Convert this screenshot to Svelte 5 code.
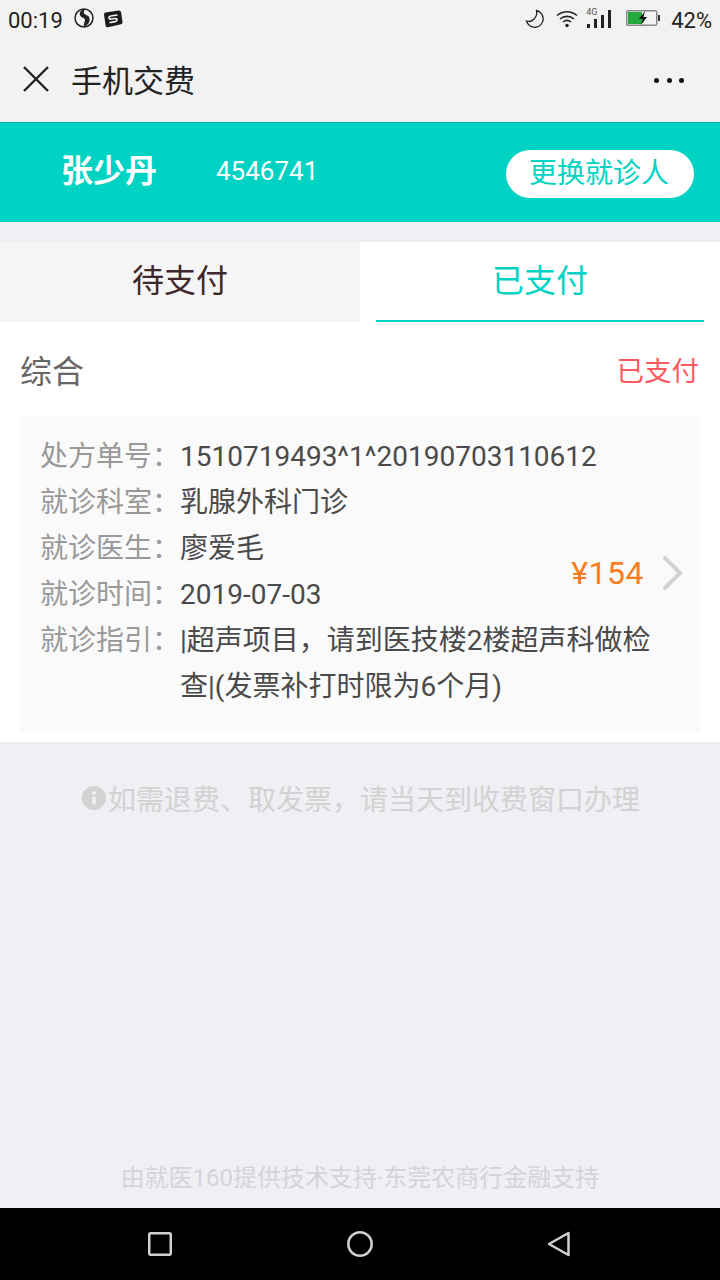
<script>
  const rows = [
    { label: '处方单号', value: '1510719493^1^20190703110612' },
    { label: '就诊科室', value: '乳腺外科门诊' },
    { label: '就诊医生', value: '廖爱毛' },
    { label: '就诊时间', value: '2019-07-03' },
    { label: '就诊指引', value: '|超声项目，请到医技楼2楼超声科做检查|(发票补打时限为6个月)' }
  ];
</script>

<div class="page">
  <header class="status">
    <div class="status-left">
      <span class="clock">00:19</span>
      <svg class="swirl" width="20" height="20" viewBox="0 0 20 20">
        <circle cx="10" cy="10" r="9" fill="none" stroke="#222" stroke-width="1.500" />
        <path d="M9 1.500C5 3 4.500 8 8.500 9.500c2.500 1 3 2.500 2 4.500l-1 4.500c5-1 6.500-5 6-8-.5-3.500-3.500-3-5-4.500C9.500 5 9.500 3 11 1.500z" fill="#222" />
      </svg>
      <svg class="sogou" width="20" height="18" viewBox="0 0 20 18">
        <path d="M1 4.500Q.8 3 2.500 2.600L15.500.4Q17.500.2 18 2l1.500 10q.3 1.800-1.500 2.300L5 17.300Q3 17.600 2.700 16z" fill="#1a1a1a" />
        <path d="M14.500 5L8 6Q5.500 6.500 6 8q.3 1.300 2.500 1l3.500-.5q2-.2 2 1.300t-2 1.800l-5.500 1" fill="none" stroke="#f2f2f2" stroke-width="1.700" />
      </svg>
    </div>
    <div class="status-right">
      <svg class="moon" width="20" height="20" viewBox="0 0 20 20">
        <path d="M11.500 1.500a8.500 8.500 0 1 1-10 10.500c5.500 2 11.500-4 10-10.500z" fill="none" stroke="#222" stroke-width="1.300" />
      </svg>
      <svg class="wifi" width="22" height="18" viewBox="0 0 22 18">
        <path d="M1 5.500c6-5 14-5 20 0M4 9c4-3.500 10-3.500 14 0M7 12c2.500-2 5.500-2 8 0" fill="none" stroke="#222" stroke-width="1.600" />
        <circle cx="11" cy="15.500" r="1.800" fill="#222" />
      </svg>
      <div class="signal">
        <span class="net">4G</span>
        <svg width="24" height="18" viewBox="0 0 24 18">
          <path d="M0 14h3v4H0zM7 9h3v9H7zM14 5h3v13h-3zM21 0h3v18h-3z" fill="#222" />
        </svg>
      </div>
      <svg class="battery" width="34" height="16" viewBox="0 0 34 16">
        <rect x=".75" y=".75" width="30" height="14.500" rx="1.500" fill="none" stroke="#888" stroke-width="1.500" />
        <rect x="2" y="2" width="14" height="12" fill="#22ab3c" />
        <rect x="32" y="5" width="2" height="6" fill="#333" />
        <path d="M19 1l-6 8h3.500l-1.500 6 6-8h-3.500z" fill="#111" />
      </svg>
      <span class="percent">42%</span>
    </div>
  </header>

  <nav class="titlebar">
    <svg class="close" width="26" height="26" viewBox="0 0 26 26">
      <path d="M1 1l24 24M25 1L1 25" fill="none" stroke="#222" stroke-width="2.400" />
    </svg>
    <h1>手机交费</h1>
    <div class="more"><i></i><i></i><i></i></div>
  </nav>

  <section class="patient">
    <span class="name">张少丹</span>
    <span class="card-no">4546741</span>
    <button>更换就诊人</button>
  </section>

  <div class="tabs">
    <div class="tab">待支付</div>
    <div class="tab active"><span>已支付</span></div>
  </div>

  <main class="order">
    <div class="order-head">
      <span class="kind">综合</span>
      <span class="state">已支付</span>
    </div>
    <div class="detail">
      <div class="rows">
        {#each rows as row}
          <div class="row">
            <span class="label">{row.label}：</span>
            <span class="value">{row.value}</span>
          </div>
        {/each}
      </div>
      <div class="price">
        <span>¥154</span>
        <svg width="22" height="34" viewBox="0 0 22 34">
          <path d="M3 2l15 15L3 32" fill="none" stroke="#d2d2d2" stroke-width="4" stroke-linecap="round" stroke-linejoin="round" />
        </svg>
      </div>
    </div>
  </main>

  <p class="notice">
    <svg width="24" height="24" viewBox="0 0 24 24">
      <circle cx="12" cy="12" r="12" fill="#d2d2d2" />
      <path d="M10.300 5.500h3.400v3h-3.400zM10.300 10.500h3.400v8h-3.400z" fill="#efeff4" />
    </svg>
    如需退费、取发票，请当天到收费窗口办理
  </p>

  <p class="support">由就医160提供技术支持·东莞农商行金融支持</p>

  <footer class="softkeys">
    <svg width="24" height="24" viewBox="0 0 24 24">
      <rect x="1.250" y="1.250" width="21.500" height="21.500" rx="1.500" fill="none" stroke="#d0d0d0" stroke-width="2.500" />
    </svg>
    <svg width="26" height="26" viewBox="0 0 26 26">
      <circle cx="13" cy="13" r="11.700" fill="none" stroke="#d0d0d0" stroke-width="2.500" />
    </svg>
    <svg width="24" height="26" viewBox="0 0 24 26">
      <path d="M21.500 2v22L2 13z" fill="none" stroke="#d0d0d0" stroke-width="2.500" stroke-linejoin="round" />
    </svg>
  </footer>
</div>

<style>
  :global(body) {
    background: #efeff4;
  }

  .page {
    display: flex;
    flex-direction: column;
    height: 1280px;
    background: #efeff4;
    font-family: Roboto, "Noto Sans CJK SC", sans-serif;
    color: #444;
  }

  .status {
    display: flex;
    justify-content: space-between;
    align-items: center;
    height: 40px;
    padding: 0 8px;
    box-sizing: border-box;
    background: #f2f2f2;
    color: #222;
  }

  .status-left,
  .status-right {
    display: flex;
    align-items: center;
  }

  .clock { font-size: 22px; margin-right: 11px; }
  .swirl { margin: -4px 9px 0 0; }
  .sogou { margin-top: -3px; }

  .moon { margin-right: 11px; margin-top: -3px; }
  .wifi { margin-right: 9px; margin-top: -3px; }
  .battery { margin-right: 11px; margin-top: -4px; }
  .percent { font-size: 22px; }

  .signal {
    position: relative;
    display: flex;
    width: 24px;
    margin-top: -3px;
    margin-right: 15px;
  }

  .net {
    position: absolute;
    left: -1px;
    top: -3px;
    font-size: 9px;
    color: #555;
  }

  .titlebar {
    display: flex;
    align-items: center;
    height: 82px;
    padding: 0 36px 4px 23px;
    box-sizing: border-box;
    background: #f2f2f2;
  }

  .close { margin-right: 22px; }

  h1 {
    flex: 1;
    margin: 0 0 2px;
    font-size: 31px;
    font-weight: 400;
    color: #222;
  }

  .more {
    display: flex;
    gap: 7.500px;
    margin-top: 2px;
  }

  .more i {
    width: 5px;
    height: 5px;
    border-radius: 50%;
    background: #111;
  }

  .patient {
    display: flex;
    align-items: center;
    height: 100px;
    padding: 0 26px 4px 61px;
    box-sizing: border-box;
    background: #00d3c4;
    border-top: 1px solid #00b5a8;
    color: #fff;
  }

  .name {
    width: 155px;
    margin-bottom: 5px;
    font-size: 32px;
    font-weight: 700;
  }

  .card-no {
    flex: 1;
    font-size: 26px;
  }

  button {
    width: 188px;
    height: 48px;
    margin-top: 6px;
    padding: 0 2px 5px 0;
    border: 0;
    border-radius: 24px;
    background: #fff;
    color: #00d3c4;
    font: inherit;
    font-size: 28px;
  }

  .tabs {
    display: flex;
    margin-top: 20px;
  }

  .tab {
    flex: 1 1 0;
    height: 80px;
    line-height: 78px;
    text-align: center;
    font-size: 32px;
    color: #40272a;
    background: #f5f5f5;
  }

  .tab.active {
    background: #fff;
    color: #00d3c4;
  }

  .tab.active span {
    display: block;
    height: 78px;
    margin: 0 16px;
    border-bottom: 2px solid #00d3c4;
  }

  .order {
    height: 420px;
    padding: 0 20px;
    box-sizing: border-box;
    background: #fff;
  }

  .order-head {
    display: flex;
    justify-content: space-between;
    align-items: center;
    height: 94px;
    padding-right: 1px;
  }

  .kind {
    font-size: 32px;
    color: #666;
  }

  .state {
    font-size: 27.500px;
    color: #ff5a5f;
  }

  .detail {
    position: relative;
    height: 316px;
    padding: 18px 0 0 20px;
    box-sizing: border-box;
    background: #fafafa;
  }

  .rows {
    width: 615px;
  }

  .row {
    display: flex;
    font-size: 28px;
    line-height: 46px;
  }

  .label {
    flex-shrink: 0;
    width: 140px;
    color: #999;
  }

  .value {
    flex: 1;
    color: #4a4a4a;
  }

  /* sits over the right end of the rows, centred on the card */
  .price {
    position: absolute;
    right: 16px;
    top: 138px;
    display: flex;
    align-items: center;
    gap: 18px;
    color: #f97d1c;
    font-size: 32px;
    letter-spacing: 0.5px;
    white-space: nowrap;
  }

  .notice {
    display: flex;
    align-items: center;
    justify-content: center;
    gap: 2px;
    margin: 37px 0 0;
    padding-left: 2px;
    height: 38px;
    font-size: 28px;
    color: #d2d2d2;
  }

  .support {
    margin: auto 0 12px;
    text-align: center;
    font-size: 24px;
    line-height: 36px;
    color: #d4d4d8;
  }

  .softkeys {
    display: flex;
    justify-content: space-between;
    align-items: center;
    height: 72px;
    padding: 0 149px 0 148px;
    background: #000;
  }
</style>
